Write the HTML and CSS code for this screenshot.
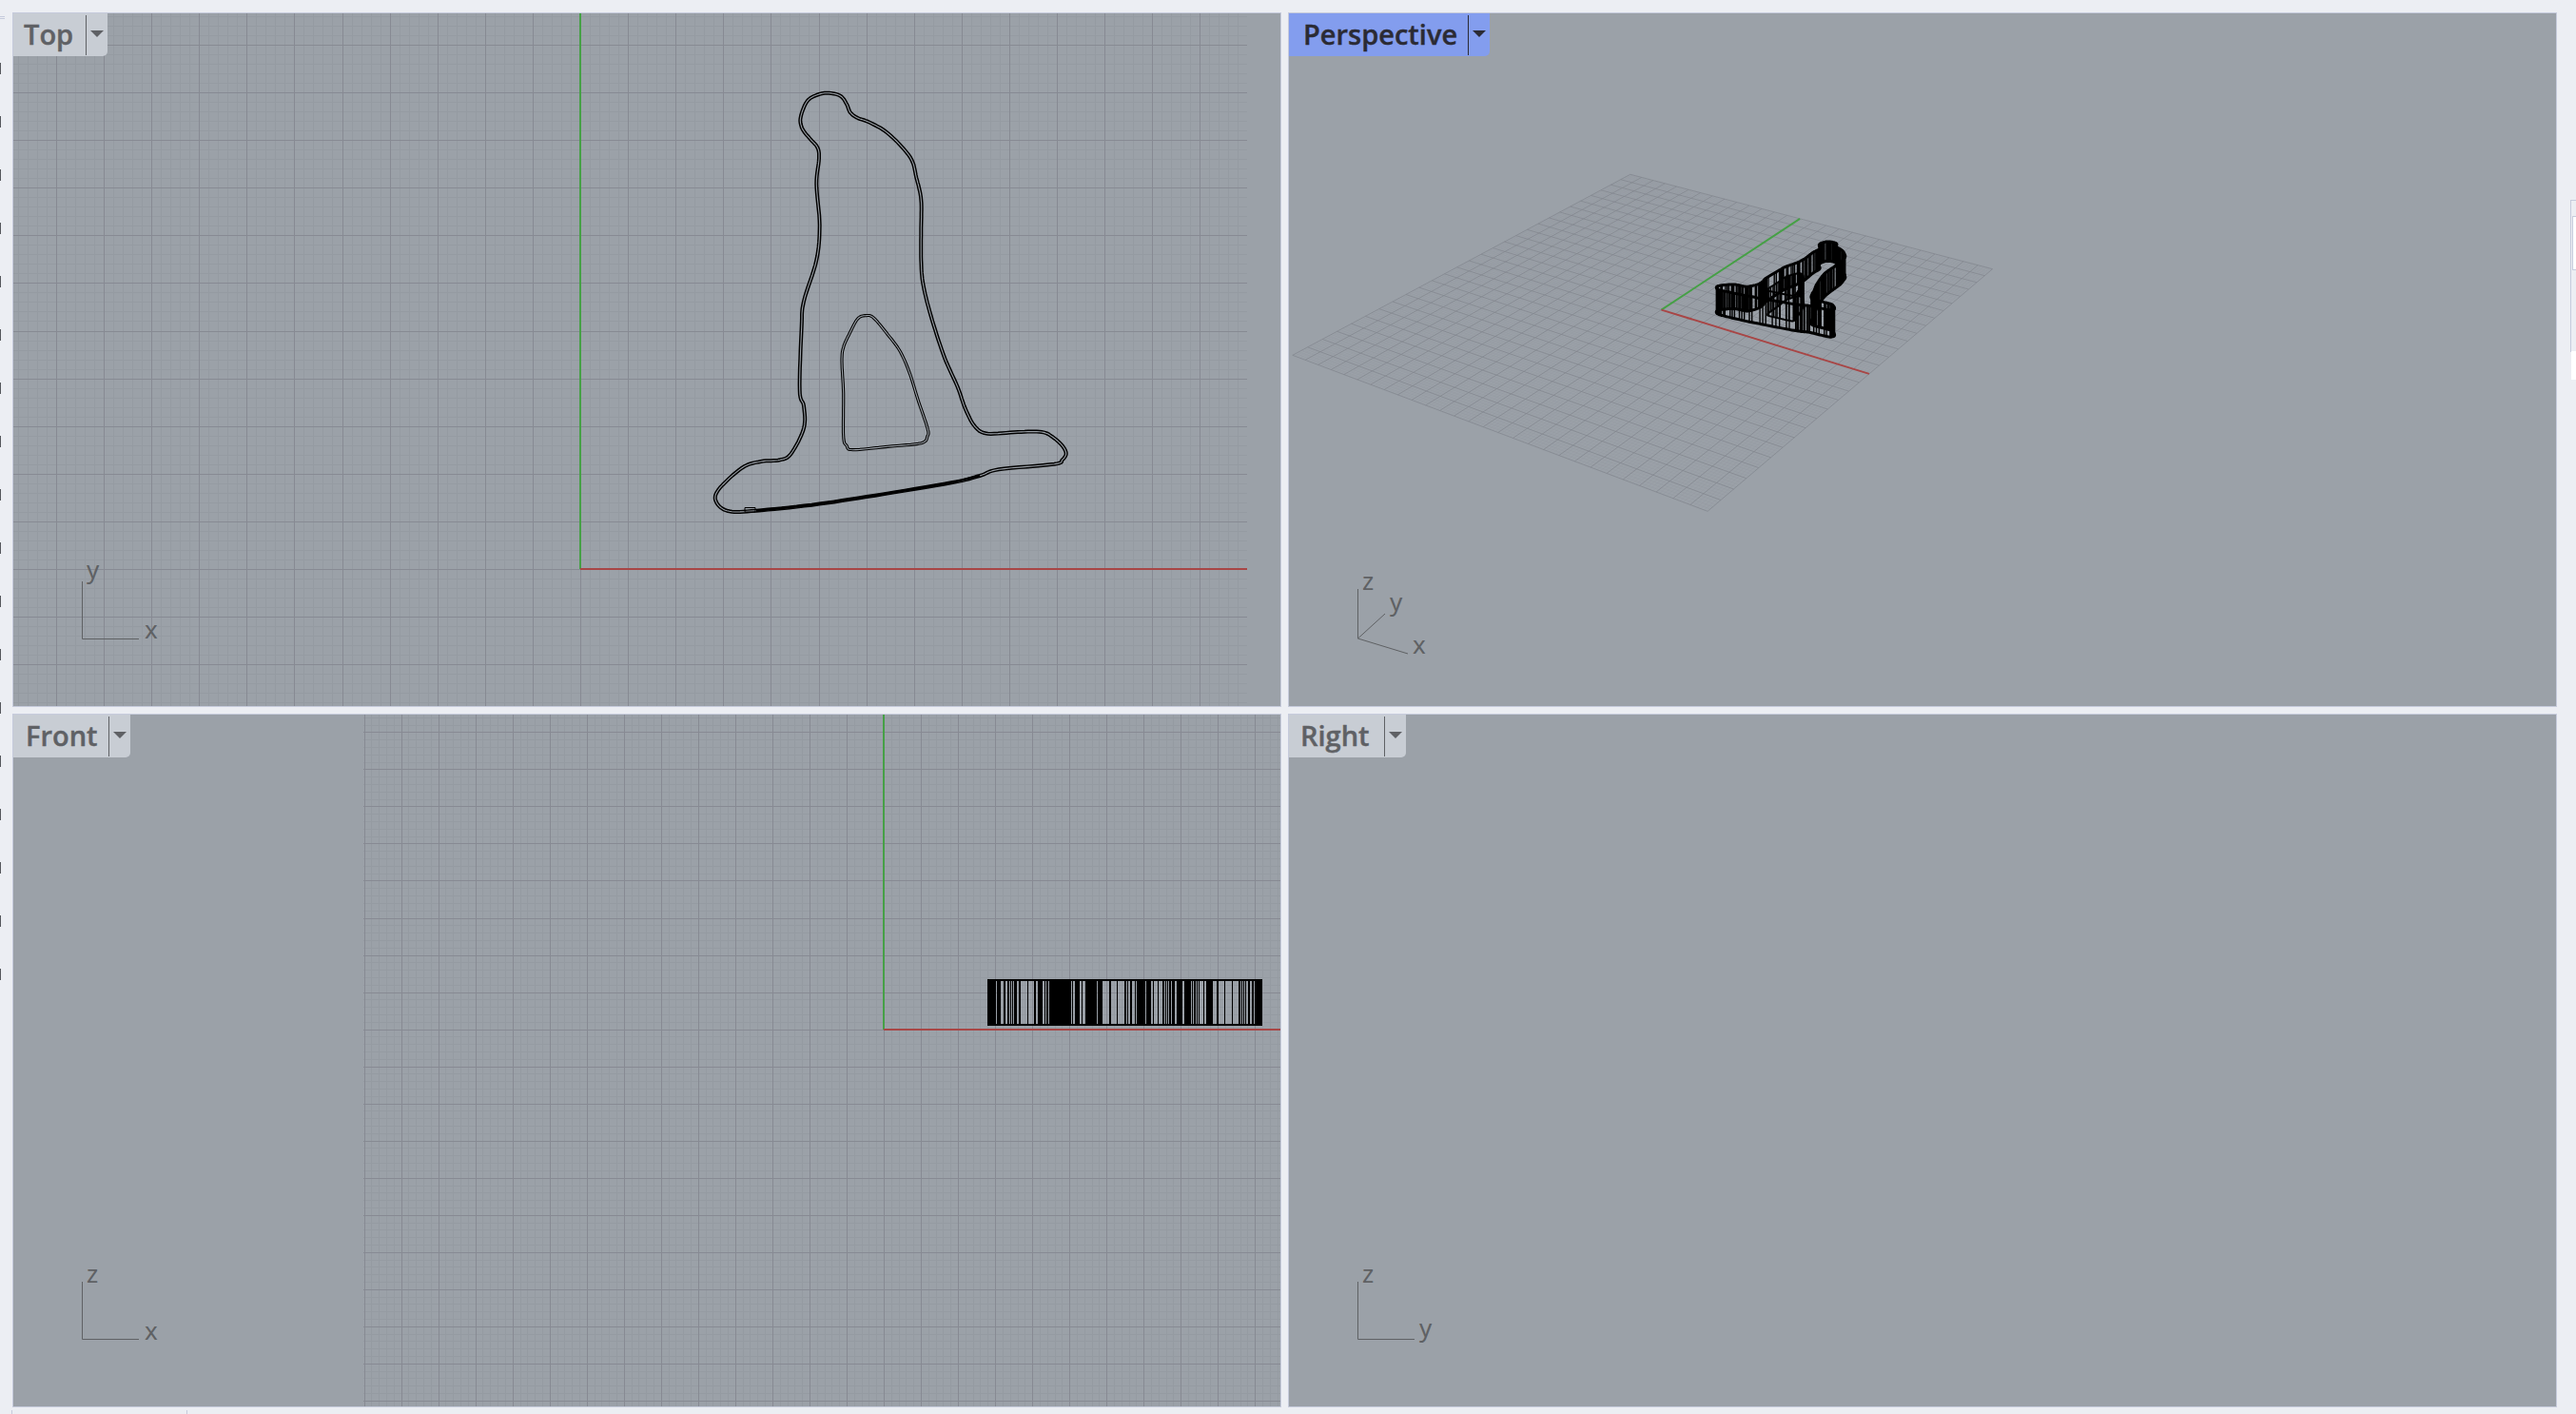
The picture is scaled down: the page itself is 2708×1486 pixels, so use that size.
FILE: index.html
```html
<!DOCTYPE html>
<html lang="en">
<head>
    <meta charset="UTF-8">
    <title>Viewports</title>
    <link rel="stylesheet" href="styles.css">
</head>
<body>
    <div class="ruler"></div>
    <div class="ruler-grip"></div>
    <div class="foot-mark foot-a"></div>
    <div class="foot-mark foot-b"></div>
    <div class="side-panel"><div class="side-box"></div><div class="side-stub"></div></div>

    <main class="viewports">
        <section class="viewport">
            <svg id="view-top" class="canvas" viewBox="13 13 1334 730">
                <g class="axes">
                    <path d="M86.5 611V671.5H146"/>
                    <text x="91" y="608">y</text>
                    <text x="152" y="671">x</text>
                </g>
            </svg>
            <div class="tab">
                <span class="tab-label tab-top">Top</span>
                <span class="tab-menu"><i class="arrow"></i></span>
            </div>
        </section>

        <section class="viewport">
            <svg id="view-persp" class="canvas" viewBox="1354 13 1334 730">
                <g class="axes">
                    <path d="M1427.5 619V671L1456 645M1427.5 671L1480 687"/>
                    <text x="1432" y="620">z</text>
                    <text x="1461" y="642">y</text>
                    <text x="1485" y="687">x</text>
                </g>
            </svg>
            <div class="tab tab-active">
                <span class="tab-label tab-persp">Perspective</span>
                <span class="tab-menu"><i class="arrow"></i></span>
            </div>
        </section>

        <section class="viewport">
            <svg id="view-front" class="canvas" viewBox="13 750 1334 729">
                <g class="axes">
                    <path d="M86.5 1347V1407.5H146"/>
                    <text x="91" y="1348">z</text>
                    <text x="152" y="1408">x</text>
                </g>
            </svg>
            <div class="tab">
                <span class="tab-label tab-front">Front</span>
                <span class="tab-menu"><i class="arrow"></i></span>
            </div>
        </section>

        <section class="viewport">
            <svg id="view-right" class="canvas" viewBox="1354 750 1334 729">
                <g class="axes">
                    <path d="M1427.5 1347V1407.5H1487"/>
                    <text x="1492" y="1405">y</text>
                    <text x="1432" y="1348">z</text>
                </g>
            </svg>
            <div class="tab">
                <span class="tab-label tab-right">Right</span>
                <span class="tab-menu"><i class="arrow"></i></span>
            </div>
        </section>
    </main>

    <script src="script.js"></script>
</body>
</html>
```

FILE: styles.css
```css
html, body {
    margin: 0;
    height: 100%;
    overflow: hidden;
}

body {
    position: relative;
    background-color: #eceef3;
}

.viewports {
    display: grid;
    grid-template-columns: 1334px 1334px;
    grid-template-rows: 730px 729px;
    column-gap: 7px;
    row-gap: 7px;
    padding: 13px 0 0 13px;
}

.viewport {
    position: relative;
    overflow: hidden;
    background-color: #9ba1a8;
}

.viewport::after {
    content: "";
    position: absolute;
    inset: 0;
    border: 1px solid #c6cbdc;
    pointer-events: none;
}

.canvas {
    display: block;
    width: 100%;
    height: 100%;
}

.tab {
    position: absolute;
    top: 1px;
    left: 1px;
    display: flex;
    height: 45px;
    background-color: #c8cdd4;
    border-bottom-right-radius: 5px;
    color: #5f6165;
    font-family: "Open Sans", sans-serif;
    font-size: 29px;
    font-weight: 600;
    line-height: 44px;
    -webkit-text-stroke: 0.4px currentColor;
}

.tab-active {
    background-color: #839dee;
    color: #2b2b34;
}

.tab-label {
    padding: 0 13px 0 11px;
    white-space: nowrap;
}

.tab-persp { padding: 0 11px 0 15px; }
.tab-front { padding: 0 11px 0 13px; }
.tab-right { padding: 0 15px 0 12px; }

.tab-menu {
    position: relative;
    width: 22px;
    margin: 2px 0 1px;
    border-left: 1px solid currentColor;
}

.arrow {
    position: absolute;
    top: 16px;
    left: 4px;
    width: 0;
    height: 0;
    border-style: solid;
    border-width: 7px 7px 0;
    border-color: currentColor transparent transparent;
}

.axes path {
    fill: none;
    stroke: #5f6164;
    stroke-width: 1;
}

.axes text {
    fill: #5f6164;
    font-family: "Noto Sans", sans-serif;
    font-size: 26px;
}

.grid-minor {
    fill: none;
    stroke: #959ba2;
    stroke-width: 1;
}

.grid-major {
    fill: none;
    stroke: #878a93;
    stroke-width: 1;
}

.persp-minor {
    fill: none;
    stroke: #8f949c;
    stroke-width: 0.5;
    stroke-opacity: 0.45;
}

.persp-major {
    fill: none;
    stroke: #82858e;
    stroke-width: 1;
    stroke-opacity: 0.75;
}

.axis-x {
    fill: none;
    stroke: #a84646;
}

.axis-y {
    fill: none;
    stroke: #46a046;
}

.curve-black {
    fill: none;
    stroke: #000;
    stroke-linejoin: round;
}

.curve-gap {
    fill: none;
    stroke: #9ba1a8;
    stroke-linejoin: round;
}

.barcode {
    fill: #000;
    fill-rule: evenodd;
}

.ruler {
    position: absolute;
    top: 0;
    left: 0;
    width: 1px;
    height: 1030px;
    background-image: repeating-linear-gradient(to bottom, transparent 0, transparent 10px, #55575c 10px, #55575c 22px, transparent 22px, transparent 56px);
    background-position: 0 56px;
    background-repeat: no-repeat;
}

.ruler-grip {
    position: absolute;
    top: 17px;
    left: 0;
    width: 5px;
    height: 1px;
    border-top: 1px solid #c6cbdc;
    border-bottom: 1px solid #c6cbdc;
}

.foot-mark {
    position: absolute;
    top: 1482px;
    width: 1px;
    height: 4px;
    background-color: #c6cbdc;
}

.foot-a { left: 12px; }
.foot-b { left: 196px; }

.side-panel {
    position: absolute;
    top: 210px;
    left: 2702px;
    width: 6px;
    height: 159px;
    border-top: 1px solid #c6cbdc;
    border-left: 1px solid #c6cbdc;
}

.side-box {
    margin: 16px 0 0 1px;
    height: 55px;
    background-color: #fff;
    border: 1px solid #c6cbdc;
    border-right: 0;
}

.side-stub {
    position: absolute;
    top: 158px;
    left: 0;
    width: 6px;
    height: 30px;
    background-color: #fff;
}
```

FILE: script.js
```js
const NS = 'http://www.w3.org/2000/svg';

function addPath(svg, d, cls, width) {
    const p = document.createElementNS(NS, 'path');
    p.setAttribute('d', d);
    p.setAttribute('class', cls);
    if (width) p.setAttribute('stroke-width', width);
    // keep the axis icon on top of the drawing
    svg.insertBefore(p, svg.querySelector('.axes'));
}

function orthoGrid(svg, g) {
    let minor = '';
    let major = '';
    const step = g.major / 5;
    for (let i = Math.ceil((g.x0 - g.ox) / step); g.ox + i * step <= g.x1; i++) {
        const x = Math.round(g.ox + i * step) + 0.5;
        const seg = `M${x} ${g.y0}V${g.y1}`;
        if (i % 5 === 0) major += seg; else minor += seg;
    }
    for (let i = Math.ceil((g.y0 - g.oy) / step); g.oy + i * step <= g.y1; i++) {
        const y = Math.round(g.oy + i * step) + 0.5;
        const seg = `M${g.x0} ${y}H${g.x1}`;
        if (i % 5 === 0) major += seg; else minor += seg;
    }
    addPath(svg, minor, 'grid-minor');
    addPath(svg, major, 'grid-major');
}

// closed catmull-rom through the traced points
function smooth(pts, n) {
    const out = [];
    const len = pts.length;
    for (let i = 0; i < len; i++) {
        const p0 = pts[(i - 1 + len) % len];
        const p1 = pts[i];
        const p2 = pts[(i + 1) % len];
        const p3 = pts[(i + 2) % len];
        for (let k = 0; k < n; k++) {
            const t = k / n;
            const t2 = t * t;
            const t3 = t2 * t;
            out.push([0, 1].map(a => 0.5 * (2 * p1[a] + (p2[a] - p0[a]) * t +
                (2 * p0[a] - 5 * p1[a] + 4 * p2[a] - p3[a]) * t2 +
                (3 * p1[a] - p0[a] - 3 * p2[a] + p3[a]) * t3)));
        }
    }
    return out;
}

function toD(pts, closed) {
    return 'M' + pts.map(p => p[0].toFixed(1) + ' ' + p[1].toFixed(1)).join('L') + (closed ? 'Z' : '');
}

// traced from the top view, 3x around (720,60)
const fromTrace = p => [720 + p[0] / 3, 60 + p[1] / 3];

const OUTER = [[450,113],[490,122],[510,148],[522,175],[545,192],[580,205],[640,240],[710,315],[730,380],[745,450],[745,540],[745,640],[752,720],[780,830],[820,950],[860,1040],[885,1110],[915,1165],[955,1187],[1050,1182],[1125,1182],[1160,1198],[1190,1225],[1202,1250],[1190,1270],[1165,1283],[990,1300],[930,1320],[840,1342],[600,1382],[400,1412],[225,1430],[140,1432],[100,1405],[105,1365],[180,1295],[240,1275],[300,1270],[335,1250],[375,1170],[375,1100],[362,1050],[368,850],[375,770],[415,640],[425,530],[415,400],[423,320],[418,285],[395,258],[370,225],[365,190],[385,140],[415,120]].map(fromTrace);

const HOLE = [[570,815],[595,822],[640,875],[680,930],[710,1000],[735,1080],[765,1170],[765,1195],[745,1217],[640,1228],[530,1238],[510,1225],[500,1195],[500,1060],[495,960],[500,915],[520,870],[545,825]].map(fromTrace);

const outerCurve = smooth(OUTER, 8);
const holeCurve = smooth(HOLE, 8);

// top view
const top_ = document.getElementById('view-top');
orthoGrid(top_, { ox: 610, oy: 598, major: 50.1, x0: 13, x1: 1311, y0: 13, y1: 743 });
addPath(top_, 'M610 13V598', 'axis-y', 2);
addPath(top_, 'M610 598H1311', 'axis-x', 2);
addPath(top_, toD(outerCurve, true), 'curve-black', 4);
addPath(top_, toD(outerCurve, true), 'curve-gap', 1.1);
addPath(top_, toD(holeCurve, true), 'curve-black', 3.2);
addPath(top_, toD(holeCurve, true), 'curve-gap', 1.1);
addPath(top_, toD([[225,1430],[400,1412],[600,1382],[840,1342],[930,1320]].map(fromTrace)), 'curve-black', 2.4);
addPath(top_, 'M783 533.5H794V538H783Z', 'curve-black', 1);

// front view
const front = document.getElementById('view-front');
orthoGrid(front, { ox: 929, oy: 1081.6, major: 39.03, x0: 382, x1: 1347, y0: 750, y1: 1479 });
addPath(front, 'M929 750V1082', 'axis-y', 2);
addPath(front, 'M929 1082H1347', 'axis-x', 2);

const GAPS = [[81,84],[95,105],[110,117],[122,125],[129,131],[135,138],[147,153],[159,164],[165,181],[183,201],[207,213],[229,234],[238,241],[245,248],[318,322],[325,330],[345,350],[353,363],[399,402],[417,439],[444,462],[464,486],[491,496],[498,504],[509,520],[522,525],[552,555],[570,575],[579,590],[594,607],[612,615],[618,621],[625,628],[633,636],[646,650],[669,675],[697,700],[703,706],[710,714],[717,720],[724,734],[737,739],[742,745],[765,777],[783,801],[805,824],[828,846],[852,855],[858,860],[864,866],[871,877],[883,887],[895,898]];
let bars = 'M1038 1029H1327V1078H1038Z';
GAPS.forEach(g => {
    const a = Math.round(1020 + g[0] / 3);
    const b = Math.max(a + 1, Math.round(1020 + g[1] / 3));
    bars += `M${a} 1031H${b}V1076H${a}Z`;
});
addPath(front, bars, 'barcode');

// perspective view: map the +-14 grid square onto the traced plane corners
const Q = [[1358.8,373.3],[1795.1,537.3],[2094.6,282.7],[1713.8,183.3]];
const H = (function() {
    const [p0, p1, p2, p3] = Q;
    const dx1 = p1[0] - p2[0], dx2 = p3[0] - p2[0], sx = p0[0] - p1[0] + p2[0] - p3[0];
    const dy1 = p1[1] - p2[1], dy2 = p3[1] - p2[1], sy = p0[1] - p1[1] + p2[1] - p3[1];
    const den = dx1 * dy2 - dx2 * dy1;
    const g = (sx * dy2 - dx2 * sy) / den;
    const h = (dx1 * sy - sx * dy1) / den;
    return {
        a: p1[0] - p0[0] + g * p1[0], b: p3[0] - p0[0] + h * p3[0], c: p0[0],
        d: p1[1] - p0[1] + g * p1[1], e: p3[1] - p0[1] + h * p3[1], f: p0[1], g, h
    };
})();

function project(wx, wy) {
    const u = (wx + 14) / 28;
    const v = (wy + 14) / 28;
    const w = H.g * u + H.h * v + 1;
    return [(H.a * u + H.b * v + H.c) / w, (H.d * u + H.e * v + H.f) / w];
}

const persp = document.getElementById('view-persp');
let pMinor = '';
let pMajor = '';
for (let i = 0; i <= 140; i++) {
    const t = -14 + i / 5;
    const seg = toD([project(t, -14), project(t, 14)]) + toD([project(-14, t), project(14, t)]);
    if (i % 5 === 0) pMajor += seg; else pMinor += seg;
}
addPath(persp, pMinor, 'persp-minor');
addPath(persp, pMajor, 'persp-major');
addPath(persp, toD([project(0, 0), project(0, 14)]), 'axis-y', 2);
addPath(persp, toD([project(0, 0), project(14, 0)]), 'axis-x', 2);

const toWorld = p => project((p[0] - 610) / 50.1, (598 - p[1]) / 50.1);
const lift = p => [p[0], p[1] - (20 + 8 * (p[1] - 270) / 80)];

function wire(curve, every, lineW) {
    const base = curve.map(toWorld);
    const roof = base.map(lift);
    addPath(persp, toD(base, true), 'curve-black', lineW);
    addPath(persp, toD(roof, true), 'curve-black', lineW);
    let d = '';
    const steps = [1, 1, 2, 1, 1, 3, 1, 2];
    let i = 0;
    let s = 0;
    while (i < base.length) {
        d += toD([base[i], roof[i]]);
        i += steps[s % steps.length] * every;
        s++;
    }
    addPath(persp, d, 'curve-black', 1.4);
}

wire(outerCurve, 1, 3);
wire(holeCurve, 2, 2);
```
